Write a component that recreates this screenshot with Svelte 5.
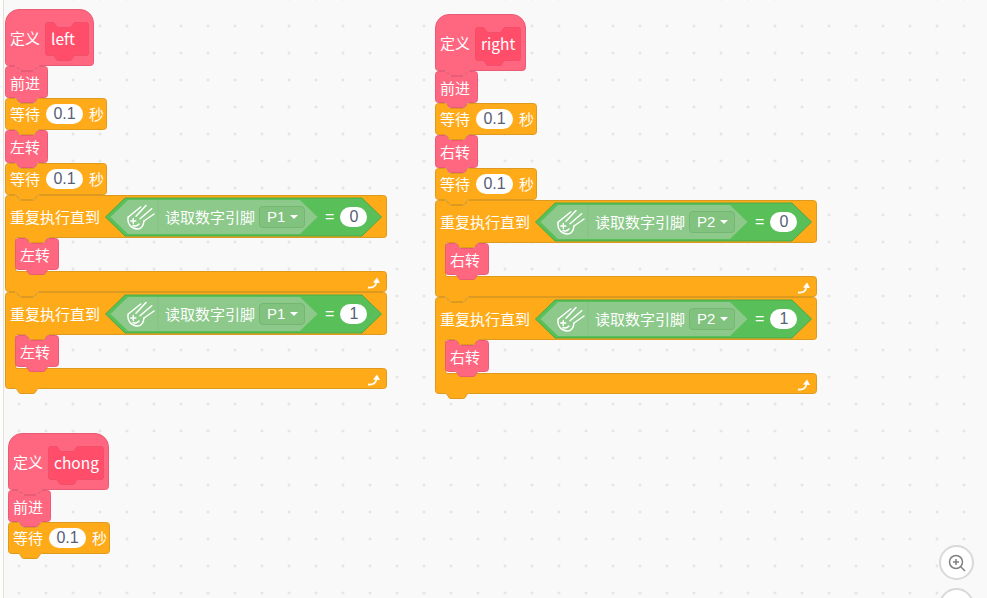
<script lang="ts">
  type Block =
    | { kind: 'hat'; label: string; name: string; w: number; innerW: number }
    | { kind: 'stack'; label: string; w: number; h: number }
    | { kind: 'wait'; w: number }
    | { kind: 'repeat'; pin: string; value: string; body: string };

  const NOTCH_X = 10;

  // left-to-right along a top edge, right-to-left along a bottom edge
  function notchRight(x: number, y: number) {
    return `L${x + NOTCH_X} ${y} c2.5 0 2.5 5 5 5 h13 c2.5 0 2.5 -5 5 -5 `;
  }
  function bumpLeft(x: number, y: number) {
    return `L${x + NOTCH_X + 23} ${y} c-2.5 0 -2.5 5 -5 5 h-13 c-2.5 0 -2.5 -5 -5 -5 `;
  }

  function stackPath(w: number, h: number) {
    return `M.5 3.5 Q.5 .5 3.5 .5 ${notchRight(0.5, 0.5)}L${w - 3.5} .5 Q${w - .5} .5 ${w - .5} 3.5 V${h - 3.5} Q${w - .5} ${h - .5} ${w - 3.5} ${h - .5} ${bumpLeft(0.5, h - .5)}L3.5 ${h - .5} Q.5 ${h - .5} .5 ${h - 3.5} Z`;
  }

  function hatPath(w: number, h: number) {
    return `M.5 14 A13.5 13.5 0 0 1 14 .5 H${w - 14} A13.5 13.5 0 0 1 ${w - .5} 14 V${h - 3.5} Q${w - .5} ${h - .5} ${w - 3.5} ${h - .5} ${bumpLeft(0.5, h - .5)}L3.5 ${h - .5} Q.5 ${h - .5} .5 ${h - 3.5} Z`;
  }

  function innerPath(w: number, h: number) {
    return `M.5 3 Q.5 .5 3 .5 H8 c2.5 0 2.5 5 5 5 h12 c2.5 0 2.5 -5 5 -5 H${w - 3} Q${w - .5} .5 ${w - .5} 3 V${h - 3} Q${w - .5} ${h - .5} ${w - 3} ${h - .5} H30 c-2.5 0 -2.5 5 -5 5 h-12 c-2.5 0 -2.5 -5 -5 -5 H3 Q.5 ${h - .5} .5 ${h - 3} Z`;
  }

  function repeatPath() {
    const w = 382, head = 43, mouth = 33, foot = 21, arm = 10;
    const h = head + mouth + foot;
    return `M.5 3.5 Q.5 .5 3.5 .5 ${notchRight(0.5, 0.5)}L${w - 3.5} .5 Q${w - .5} .5 ${w - .5} 3.5 V${head - 3} Q${w - .5} ${head - .5} ${w - 3.5} ${head - .5} ${bumpLeft(arm + .5, head - .5)}L${arm + 2} ${head - .5} Q${arm + .5} ${head - .5} ${arm + .5} ${head + 2} V${head + mouth - 2} Q${arm + .5} ${head + mouth + .5} ${arm + 2} ${head + mouth + .5} H${w - 3.5} Q${w - .5} ${head + mouth + .5} ${w - .5} ${head + mouth + 3.5} V${h - 3.5} Q${w - .5} ${h - .5} ${w - 3.5} ${h - .5} ${bumpLeft(0.5, h - .5)}L3.5 ${h - .5} Q.5 ${h - .5} .5 ${h - 3.5} Z`;
  }

  function hexPath(w: number, h: number, d: number) {
    return `M.5 ${h / 2} L${d} 1 H${w - d} L${w - .5} ${h / 2} L${w - d} ${h - 1} H${d} Z`;
  }

  function sequence(name: string, hatW: number, innerW: number, turn: string, pin: string): Block[] {
    return [
      { kind: 'hat', label: '定义', name, w: hatW, innerW },
      { kind: 'stack', label: '前进', w: 43, h: 32 },
      { kind: 'wait', w: 102 },
      { kind: 'stack', label: turn, w: 43, h: 33 },
      { kind: 'wait', w: 102 },
      { kind: 'repeat', pin, value: '0', body: turn },
      { kind: 'repeat', pin, value: '1', body: turn }
    ];
  }

  const scripts: { x: number; y: number; blocks: Block[] }[] = [
    { x: 5, y: 9, blocks: sequence('left', 89, 44, '左转', 'P1') },
    { x: 435, y: 14, blocks: sequence('right', 91, 46, '右转', 'P2') },
    {
      x: 8,
      y: 433,
      blocks: [
        { kind: 'hat', label: '定义', name: 'chong', w: 101, innerW: 56 },
        { kind: 'stack', label: '前进', w: 43, h: 32 },
        { kind: 'wait', w: 102 }
      ]
    }
  ];
</script>

{#snippet hatBlock(b)}
  <div class="block hat" style="width: {b.w}px">
    <svg class="shape pink" width={b.w} height="57"><path d={hatPath(b.w, 57)} /></svg>
    <span class="txt">{b.label}</span>
    <div class="param" style="width: {b.innerW}px">
      <svg class="shape param-shape" width={b.innerW} height="34"><path d={innerPath(b.innerW, 34)} /></svg>
      <span class="txt name">{b.name}</span>
    </div>
  </div>
{/snippet}

{#snippet stackBlock(label, w, h)}
  <div class="block stack" style="width: {w}px; height: {h}px">
    <svg class="shape pink" width={w} height={h}><path d={stackPath(w, h)} /></svg>
    <span class="txt">{label}</span>
  </div>
{/snippet}

{#snippet waitBlock(w)}
  <div class="block wait" style="width: {w}px">
    <svg class="shape orange" width={w} height="32"><path d={stackPath(w, 32)} /></svg>
    <span class="txt">等待</span>
    <span class="pill">0.1</span>
    <span class="txt">秒</span>
  </div>
{/snippet}

{#snippet repeatBlock(b)}
  <div class="block repeat">
    <svg class="shape orange" width="382" height="97"><path d={repeatPath()} /></svg>
    <div class="repeat-head">
      <span class="txt">重复执行直到</span>
      <div class="bool">
        <svg class="shape green" width="277" height="40"><path d={hexPath(277, 40, 20)} /></svg>
        <div class="sensor">
          <svg class="shape light" width="208" height="36"><path d={hexPath(208, 36, 18)} /><path class="split" d="M48 1.5V34.5" /></svg>
          <svg class="comet" width="28" height="26" viewBox="0 0 28 26">
            <path d="M1.3 13 13.7 3M9 12.3 19 1.5M13 14.7 24.7 4.7M17 17 27 10" />
            <path d="M1.3 13C-.5 20 5 25.5 11 25 14.5 24.7 16.5 21 17 17" />
            <path d="M6.3 14.5v5M3.8 17h5" />
            <path d="M6 21.5q3.5 1.5 6-1.5" />
          </svg>
          <span class="txt sensor-label">读取数字引脚</span>
          <span class="dropdown"><span class="txt">{b.pin}</span><i class="caret"></i></span>
        </div>
        <span class="txt equals">=</span>
        <span class="pill round">{b.value}</span>
      </div>
    </div>
    <div class="mouth">{@render stackBlock(b.body, 44, 32)}</div>
    <div class="repeat-foot">
      <svg width="14" height="12" viewBox="0 0 14 12"><path d="M1 10.5c5 .5 8-1.5 8.5-6" /><path class="fill" d="M6 5.5 10 .5l3 5.5Z" /></svg>
    </div>
  </div>
{/snippet}

<div class="canvas">
  {#each scripts as script}
    <div class="script" style="left: {script.x}px; top: {script.y}px">
      {#each script.blocks as b, i}
        <div class="slot" style="z-index: {script.blocks.length - i}">
          {#if b.kind === 'hat'}
            {@render hatBlock(b)}
          {:else if b.kind === 'stack'}
            {@render stackBlock(b.label, b.w, b.h)}
          {:else if b.kind === 'wait'}
            {@render waitBlock(b.w)}
          {:else}
            {@render repeatBlock(b)}
          {/if}
        </div>
      {/each}
    </div>
  {/each}

  <div class="zoom-buttons">
    <button class="zoom-btn" aria-label="放大">
      <svg width="20" height="20" viewBox="0 0 20 20"><circle cx="9" cy="9" r="6.5" /><path d="M9 6v6M6 9h6M14 14l4 4" /></svg>
    </button>
    <button class="zoom-btn" aria-label="缩小"></button>
  </div>
</div>

<style>
  :global(body) {
    margin: 0;
    overflow: hidden;
  }

  .canvas {
    position: relative;
    width: 987px;
    height: 598px;
    overflow: hidden;
    background-color: #f9f9f9;
    background-image: radial-gradient(circle, #dedede 1px, transparent 1.3px);
    background-size: 27px 27px;
    background-position: 5.5px 12.5px;
    font-family: "Noto Sans CJK SC", "Noto Sans", sans-serif;
  }

  /* panel edge on the left of the workspace */
  .canvas::before {
    content: "";
    position: absolute;
    left: 0;
    top: 0;
    bottom: 0;
    width: 3px;
    background: #fdfdfd;
    border-right: 1px solid #e6e0d6;
  }

  .script {
    position: absolute;
    display: flex;
    flex-direction: column;
    align-items: flex-start;
  }

  .slot {
    position: relative;
  }

  .block {
    position: relative;
    display: flex;
    align-items: center;
    box-sizing: border-box;
    padding-left: 5px;
  }

  .shape {
    position: absolute;
    left: 0;
    top: 0;
    overflow: visible;
  }

  .pink path { fill: #ff6680; stroke: #ea5c75; }
  .orange path { fill: #ffab19; stroke: #de9a1f; }
  .green path { fill: #59c059; stroke: #4aa94a; }
  .light path { fill: #8cc98a; stroke: none; }
  .light .split { fill: none; stroke: #84c182; }
  .param-shape path { fill: #ff4d6a; stroke: #f0506c; }

  .txt {
    position: relative;
    color: #fff;
    font-size: 15px;
    line-height: 20px;
    white-space: nowrap;
  }

  .name {
    font-size: 15.5px;
  }

  .hat {
    height: 57px;
    gap: 5px;
    padding-top: 3px;
  }

  .hat > .txt {
    margin-bottom: 2px;
  }

  .param {
    position: relative;
    height: 34px;
    display: flex;
    align-items: center;
    box-sizing: border-box;
    padding: 0 0 2px 6px;
  }

  .stack {
    padding-top: 1px;
  }

  .wait {
    height: 32px;
    gap: 6px;
  }

  .pill {
    position: relative;
    display: flex;
    align-items: center;
    justify-content: center;
    width: 37px;
    height: 20px;
    border-radius: 10px;
    background: #fff;
    color: #575e75;
    font-size: 16px;
    font-family: "Liberation Sans", Arial, sans-serif;
  }

  .repeat {
    display: block;
    width: 382px;
    height: 97px;
    padding: 0;
  }

  .repeat-head {
    position: relative;
    display: flex;
    align-items: center;
    height: 43px;
    padding-left: 5px;
  }

  .bool {
    position: relative;
    display: flex;
    align-items: center;
    width: 277px;
    height: 40px;
    margin-left: 5px;
    padding-left: 5px;
    box-sizing: border-box;
  }

  .sensor {
    position: relative;
    display: flex;
    align-items: center;
    width: 208px;
    height: 36px;
    padding-left: 17px;
    box-sizing: border-box;
  }

  .comet {
    position: relative;
    flex: none;
  }

  .comet path {
    fill: none;
    stroke: #fff;
    stroke-width: 1.5;
    stroke-linecap: round;
  }

  .sensor-label {
    margin-left: 10px;
  }

  .dropdown {
    position: relative;
    display: flex;
    align-items: center;
    gap: 5px;
    box-sizing: border-box;
    width: 46px;
    height: 22px;
    margin-left: 4px;
    padding-left: 7px;
    border: 1px solid #74b772;
    border-radius: 4px;
    background: #80c27e;
  }

  .dropdown .txt {
    font-size: 15px;
    font-family: "Liberation Sans", Arial, sans-serif;
  }

  .caret {
    width: 0;
    height: 0;
    border: 4px solid transparent;
    border-top: 4px solid #fff;
    border-bottom: 0;
  }

  .equals {
    margin-left: 7px;
    font-size: 16px;
    font-family: "Liberation Sans", Arial, sans-serif;
  }

  .round {
    width: 27px;
    margin-left: 6px;
  }

  .mouth {
    position: relative;
    height: 33px;
    padding-left: 10px;
  }

  .repeat-foot {
    position: relative;
    display: flex;
    justify-content: flex-end;
    align-items: center;
    box-sizing: border-box;
    height: 21px;
    padding: 2px 6px 0 0;
  }

  .repeat-foot path {
    fill: none;
    stroke: #fff;
    stroke-width: 1.8;
  }

  .repeat-foot .fill {
    fill: #fff;
    stroke: none;
  }

  .zoom-buttons {
    position: absolute;
    left: 939px;
    top: 545px;
    display: flex;
    flex-direction: column;
    gap: 8px;
  }

  .zoom-btn {
    display: flex;
    align-items: center;
    justify-content: center;
    width: 35px;
    height: 35px;
    padding: 0;
    border: 2px solid #d9d9d9;
    border-radius: 50%;
    background: #fff;
  }

  .zoom-btn svg {
    fill: none;
    stroke: #808080;
    stroke-width: 1.5;
  }
</style>
